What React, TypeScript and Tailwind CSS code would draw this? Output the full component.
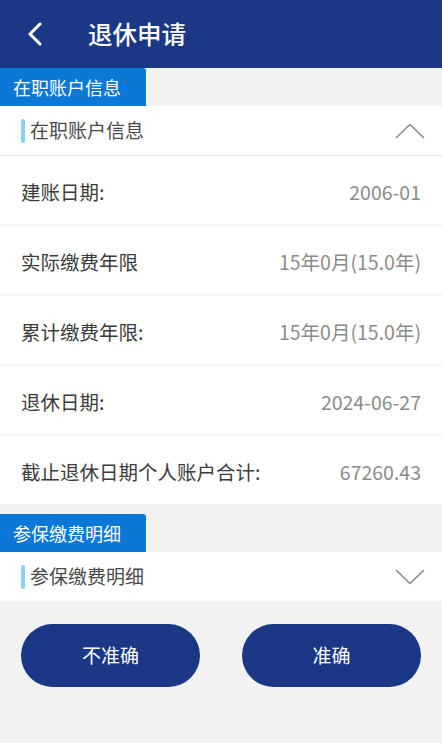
const font = { fontFamily: '"Noto Sans CJK SC", "Noto Sans", sans-serif' }

const rows = [
  { label: '建账日期:', value: '2006-01' },
  { label: '实际缴费年限', value: '15年0月(15.0年)' },
  { label: '累计缴费年限:', value: '15年0月(15.0年)' },
  { label: '退休日期:', value: '2024-06-27' },
  { label: '截止退休日期个人账户合计:', value: '67260.43' },
]

function Chevron({ up }: { up?: boolean }) {
  return (
    <svg width="30" height="16" viewBox="0 0 30 16" fill="none" className="mr-[17px]">
      <path
        d={up ? 'M1.5 14.5 L15 1.5 L28.5 14.5' : 'M1.5 1.5 L15 14.5 L28.5 1.5'}
        stroke="#8a8a8a"
        strokeWidth="1.6"
        strokeLinecap="round"
        strokeLinejoin="round"
      />
    </svg>
  )
}

function Tab({ label }: { label: string }) {
  return (
    <div className="flex h-[38px] bg-[#f2f2f2]">
      <div className="flex w-[146px] items-center rounded-tr-[3px] bg-[#0b77d7] pl-[13px] text-[18px] text-white">
        {label}
      </div>
    </div>
  )
}

function SectionHeader({ label, up }: { label: string; up?: boolean }) {
  return (
    <div className="flex h-[49px] items-center justify-between bg-white">
      <div className="flex items-center pl-[21px]">
        <span className="h-[24px] w-[4px] rounded-full bg-[#86d4f5]" />
        <span className="ml-[5px] text-[19px] text-[#4a4a4a]">{label}</span>
      </div>
      <Chevron up={up} />
    </div>
  )
}

export default function App() {
  return (
    <div className="flex min-h-[743px] w-[442px] flex-col bg-[#f2f2f2]" style={font}>
      <header className="flex h-[68px] items-center bg-[#1a3885]">
        <svg width="16" height="24" viewBox="0 0 16 24" fill="none" className="ml-[27px]">
          <path d="M13 2 L3 12 L13 22" stroke="white" strokeWidth="3" strokeLinecap="round" strokeLinejoin="round" />
        </svg>
        <h1 className="ml-[45px] text-[24.5px] font-medium text-white">退休申请</h1>
      </header>

      <Tab label="在职账户信息" />
      <div className="border-b border-[#ececec]">
        <SectionHeader label="在职账户信息" up />
      </div>
      <div className="flex flex-col gap-[2px] bg-[#f6f6f6]">
        {rows.map((r) => (
          <div key={r.label} className="flex h-[68px] items-center justify-between bg-white px-[21px] pt-[4px]">
            <span className="text-[19.5px] text-[#3c3c3c]">{r.label}</span>
            <span className="text-[19.5px] text-[#8c8c8c]">{r.value}</span>
          </div>
        ))}
      </div>

      <div className="mt-[10px]">
        <Tab label="参保缴费明细" />
        <SectionHeader label="参保缴费明细" />
      </div>

      <div className="flex justify-between px-[21px] pt-[23px]">
        <button className="h-[63px] w-[179px] rounded-full bg-[#1a3885] text-[19px] text-white">不准确</button>
        <button className="h-[63px] w-[179px] rounded-full bg-[#1a3885] text-[19px] text-white">准确</button>
      </div>
    </div>
  )
}
